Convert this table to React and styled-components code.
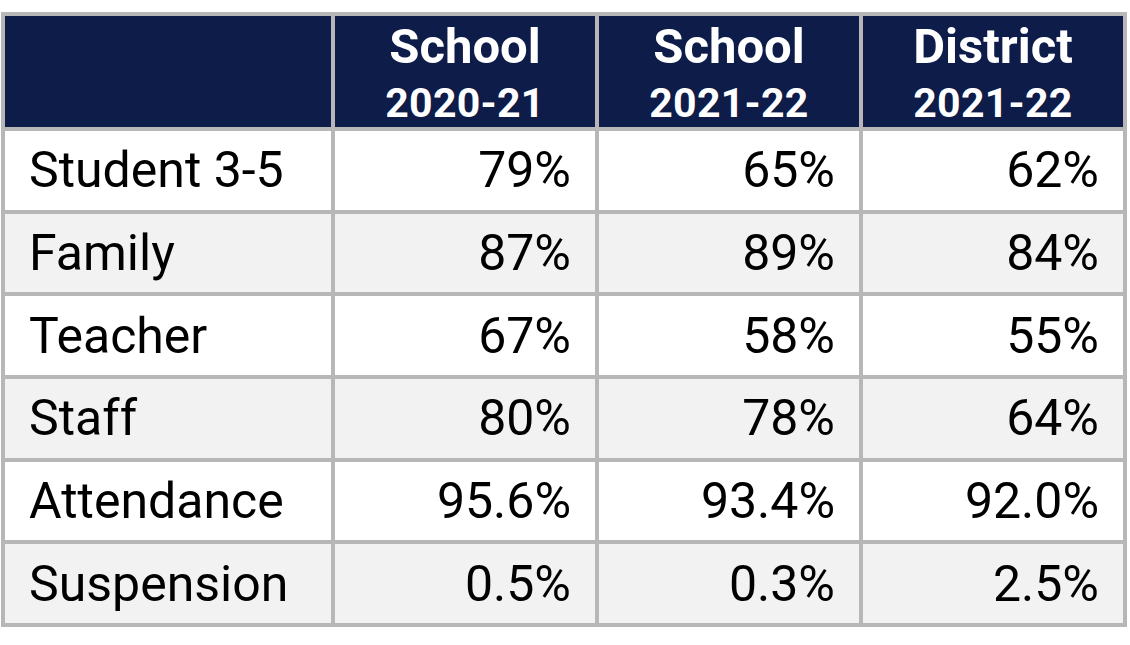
import React from "react";
import styled, { createGlobalStyle } from "styled-components";

const Global = createGlobalStyle`
  html, body { margin: 0; padding: 0; background: #ffffff; }
  body { font-family: Roboto, "Liberation Sans", Arial, sans-serif; }
`;

const Page = styled.div`
  width: 1130px;
  height: 645px;
  padding: 12px 0 0 1px;
  box-sizing: border-box;
`;

const Table = styled.div`
  display: grid;
  grid-template-columns: 326px 260px 260px 260px;
  grid-template-rows: 111px repeat(6, 1fr);
  gap: 4px;
  padding: 4px;
  width: 1126px;
  height: 615px;
  box-sizing: border-box;
  background: #b7b7b7;
`;

const HeadCell = styled.div`
  background: #0e1c4a;
  color: #ffffff;
  display: flex;
  flex-direction: column;
  align-items: center;
  justify-content: flex-start;
  padding-top: 6px;
  gap: 12px;
  font-weight: 700;
  line-height: 1;
  box-sizing: border-box;
`;

const HeadTop = styled.span`
  font-size: 49px;
  line-height: 49px;
`;

const HeadBottom = styled.span`
  font-size: 41px;
  line-height: 41px;
  letter-spacing: 0.3px;
`;

const Cell = styled.div`
  background: ${(p) => (p.$alt ? "#f2f2f2" : "#ffffff")};
  color: #000000;
  display: flex;
  align-items: center;
  justify-content: ${(p) => (p.$num ? "flex-end" : "flex-start")};
  padding: 0 24px 0 24px;
  font-size: 50px;
  font-weight: 400;
`;

const headers = [
  ["School", "2020-21"],
  ["School", "2021-22"],
  ["District", "2021-22"],
];

const rows = [
  ["Student 3-5", "79%", "65%", "62%"],
  ["Family", "87%", "89%", "84%"],
  ["Teacher", "67%", "58%", "55%"],
  ["Staff", "80%", "78%", "64%"],
  ["Attendance", "95.6%", "93.4%", "92.0%"],
  ["Suspension", "0.5%", "0.3%", "2.5%"],
];

export default function App() {
  return (
    <Page>
      <Global />
      <Table>
        <HeadCell />
        {headers.map(([a, b], i) => (
          <HeadCell key={i}>
            <HeadTop>{a}</HeadTop>
            <HeadBottom>{b}</HeadBottom>
          </HeadCell>
        ))}
        {rows.map((r, ri) =>
          r.map((v, ci) => (
            <Cell key={ri + "-" + ci} $alt={ri % 2 === 1} $num={ci > 0}>
              {v}
            </Cell>
          ))
        )}
      </Table>
    </Page>
  );
}
